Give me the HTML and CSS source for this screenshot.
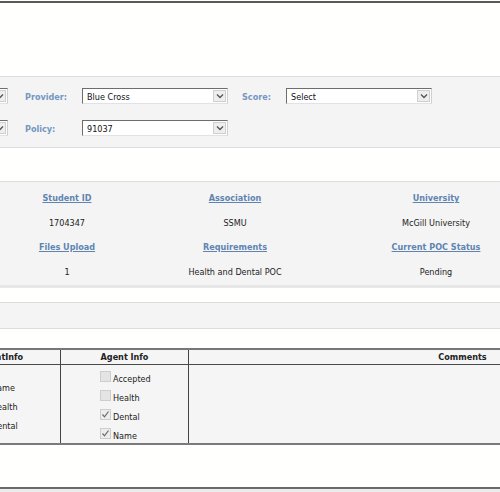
FILE: index.html
```html
<!DOCTYPE html>
<html lang="en">
<head>
    <meta charset="UTF-8">
    <meta name="viewport" content="width=device-width, initial-scale=1.0">
    <title>POC Review</title>
    <link rel="stylesheet" href="styles.css">
</head>
<body>
<div class="page">
    <div class="masthead"></div>

    <div class="filters">
        <div class="filter-row">
            <span class="select cut"><span class="value"></span><span class="arrow"><svg width="8" height="6" viewBox="0 0 8 6"><path d="M1 1.5 L4 4.5 L7 1.5" fill="none" stroke="#555" stroke-width="1.3"/></svg></span></span>
            <span class="flabel">Provider:</span>
            <span class="select"><span class="value">Blue Cross</span><span class="arrow"><svg width="8" height="6" viewBox="0 0 8 6"><path d="M1 1.5 L4 4.5 L7 1.5" fill="none" stroke="#555" stroke-width="1.3"/></svg></span></span>
            <span class="flabel short">Score:</span>
            <span class="select"><span class="value">Select</span><span class="arrow"><svg width="8" height="6" viewBox="0 0 8 6"><path d="M1 1.5 L4 4.5 L7 1.5" fill="none" stroke="#555" stroke-width="1.3"/></svg></span></span>
        </div>
        <div class="filter-row">
            <span class="select cut"><span class="value"></span><span class="arrow"><svg width="8" height="6" viewBox="0 0 8 6"><path d="M1 1.5 L4 4.5 L7 1.5" fill="none" stroke="#555" stroke-width="1.3"/></svg></span></span>
            <span class="flabel">Policy:</span>
            <span class="select"><span class="value">91037</span><span class="arrow"><svg width="8" height="6" viewBox="0 0 8 6"><path d="M1 1.5 L4 4.5 L7 1.5" fill="none" stroke="#555" stroke-width="1.3"/></svg></span></span>
        </div>
    </div>

    <div class="summary">
        <a class="head">Student ID</a>
        <a class="head">Association</a>
        <a class="head">University</a>
        <span>1704347</span>
        <span>SSMU</span>
        <span>McGill University</span>
        <a class="head">Files Upload</a>
        <a class="head">Requirements</a>
        <a class="head">Current POC Status</a>
        <span>1</span>
        <span>Health and Dental POC</span>
        <span>Pending</span>
    </div>

    <div class="bar"></div>

    <table class="review">
        <tr>
            <th class="c-student">StudentInfo</th>
            <th class="c-agent">Agent Info</th>
            <th class="c-comments">Comments</th>
        </tr>
        <tr>
            <td class="c-student">
                <ul class="checks">
                    <li><span class="box"></span>Name</li>
                    <li><span class="box"></span>Health</li>
                    <li><span class="box"></span>Dental</li>
                </ul>
            </td>
            <td class="c-agent">
                <ul class="checks">
                    <li><span class="box"></span>Accepted</li>
                    <li><span class="box"></span>Health</li>
                    <li><span class="box on"><svg width="9" height="9" viewBox="0 0 9 9"><path d="M1.5 4.5 L3.5 6.8 L7.5 1.5" fill="none" stroke="#6a6a6a" stroke-width="1.2"/></svg></span>Dental</li>
                    <li><span class="box on"><svg width="9" height="9" viewBox="0 0 9 9"><path d="M1.5 4.5 L3.5 6.8 L7.5 1.5" fill="none" stroke="#6a6a6a" stroke-width="1.2"/></svg></span>Name</li>
                </ul>
            </td>
            <td class="c-comments"></td>
        </tr>
    </table>

    <div class="footer-rule"></div>
</div>
</body>
</html>
```

FILE: styles.css
```css
html, body
{
    margin: 0;
    padding: 0;
    background-color: #ececec;
}
body
{
    font-family: "DejaVu Sans Condensed", "DejaVu Sans", sans-serif;
    font-size: 9px;
    color: #222;
    overflow: hidden;
}
.page
{
    width: 500px;
    background-color: #fffffd;
    padding-top: 1px;
}
.masthead
{
    border-top: 2px solid #5a5a56;
    height: 73px;
}

/* filter panel */
.filters
{
    background-color: #f4f4f4;
    border-top: 1px solid #dcdcdc;
    border-bottom: 1px solid #dcdcdc;
    padding: 11px 0 11px 0;
    display: flex;
    flex-direction: column;
    gap: 16px;
}
.filter-row
{
    display: flex;
    align-items: center;
    height: 16px;
}
.flabel
{
    width: 57px;
    margin-left: 17px;
    padding-top: 1px;
    color: #7597c2;
    font-weight: bold;
}
.flabel.short
{
    width: 44px;
    margin-left: 14px;
}
.select
{
    display: flex;
    align-items: center;
    box-sizing: border-box;
    width: 146px;
    height: 16px;
    background-color: #fff;
    border-top: 1px solid #6d6d6d;
    border-left: 1px solid #6d6d6d;
    border-right: 1px solid #d0d0d0;
    border-bottom: 1px solid #e2e2e2;
}
.select.cut
{
    width: 60px;
    margin-left: -52px;
}
.select .value
{
    flex: 1;
    padding: 1px 0 0 4px;
    color: #111;
}
.select .arrow
{
    display: flex;
    align-items: center;
    justify-content: center;
    width: 13px;
    height: 12px;
    margin-right: 1px;
    background-color: #eee;
    border: 1px solid #cfcfcf;
    box-sizing: border-box;
}

/* summary panel */
.summary
{
    margin-top: 33px;
    background-color: #f4f4f4;
    border-top: 1px solid #dedede;
    border-bottom: 3px solid #e7e7e7;
    padding: 4px 0 1px 0;
    display: grid;
    grid-template-columns: 134px 202px 200px;
    grid-auto-rows: 24.5px;
    align-items: center;
    text-align: center;
}
.summary .head
{
    color: #5f84b1;
    font-weight: bold;
    text-decoration: underline;
}

.bar
{
    margin-top: 14px;
    height: 25px;
    background-color: #f4f4f4;
    border-top: 1px solid #dcdcdc;
    border-bottom: 1px solid #dcdcdc;
}

/* review table */
.review
{
    margin-top: 19px;
    margin-left: -60px;
    width: 796px;
    table-layout: fixed;
    border-collapse: collapse;
    background-color: #f5f5f5;
}
.review th
{
    height: 14px;
    padding: 0;
    font-weight: bold;
    text-align: center;
    border-top: 2px solid #777;
    border-bottom: 1px solid #4a4a4a;
}
.review th.c-student
{
    text-indent: -8px;
}
.review td
{
    height: 78px;
    padding: 0;
    vertical-align: top;
    border-bottom: 2px solid #7a7a7a;
}
.review .c-student
{
    width: 120px;
    border-right: 1px solid #444;
}
.review .c-agent
{
    width: 127px;
    border-right: 1px solid #444;
}
.checks
{
    list-style-type: none;
    margin: 0;
    padding: 0;
    height: 78px;
    box-sizing: border-box;
}
.review td.c-student .checks
{
    padding: 13px 0 0 38px;
}
.review td.c-agent .checks
{
    padding: 4px 0 0 39px;
}
.checks li
{
    display: flex;
    align-items: center;
    height: 19px;
}
.box
{
    display: inline-flex;
    align-items: center;
    justify-content: center;
    box-sizing: border-box;
    width: 11px;
    height: 11px;
    margin-right: 2px;
    margin-top: -4px;
    border: 1px solid #cdcdcd;
    background-color: #e4e4e4;
}
.box.on
{
    background-color: #ededed;
}

.footer-rule
{
    height: 42px;
    border-bottom: 2px solid #6a6a6a;
}
```
